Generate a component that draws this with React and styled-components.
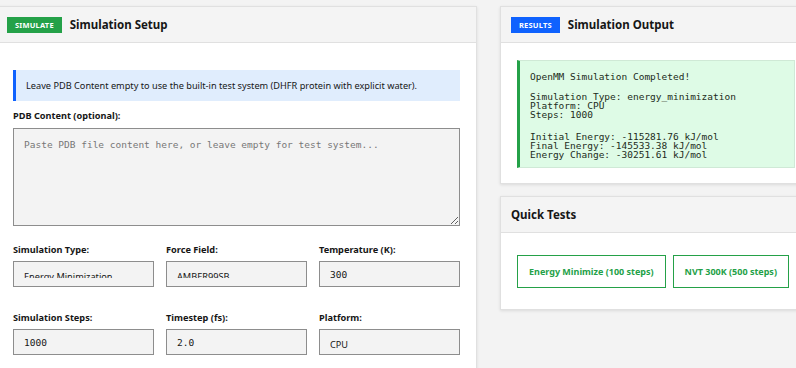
import styled, { createGlobalStyle } from 'styled-components'

const GlobalStyle = createGlobalStyle`
  html, body {
    margin: 0;
    padding: 0;
    background: #f3f3f3;
    overflow: hidden;
  }
  body {
    font-family: 'Noto Sans', 'Liberation Sans', sans-serif;
    color: #161616;
  }
`

const colors = {
  green: '#24a148',
  blue: '#0f62fe',
  text: '#161616',
  border: '#e0e0e0',
  field: '#f3f3f3',
  fieldBorder: '#8d8d8d',
}

const mono = `'DejaVu Sans Mono', 'Liberation Mono', monospace`

const Page = styled.div`
  display: grid;
  grid-template-columns: 481px 312px;
  column-gap: 23px;
  align-items: start;
  padding-top: 6px;
  margin-left: -4px;
  width: 830px;
`

const Column = styled.div`
  display: flex;
  flex-direction: column;
  gap: 12px;
`

const Panel = styled.section`
  background: #ffffff;
  border: 1px solid ${colors.border};
  box-shadow: 0 1px 3px rgba(0, 0, 0, 0.1);
  height: ${({ $tall }) => ($tall ? '400px' : 'auto')};
`

const PanelHeader = styled.header`
  display: flex;
  align-items: center;
  gap: 8px;
  height: 35px;
  padding: 0 10px;
  background: #f4f4f4;
  border-bottom: 1px solid ${colors.border};
`

const Badge = styled.span`
  display: inline-flex;
  align-items: center;
  justify-content: center;
  height: 16px;
  padding: 0 8px;
  background: ${({ $tone }) => ($tone === 'blue' ? colors.blue : colors.green)};
  color: #ffffff;
  font-size: 7.5px;
  font-weight: 700;
  letter-spacing: 0.2px;
  text-transform: uppercase;
`

const PanelTitle = styled.h2`
  margin: 0;
  font-size: 11.5px;
  font-weight: 700;
  color: ${colors.text};
`

const PanelBody = styled.div`
  padding: ${({ $pad }) => $pad || '16px'};
`

const InfoNote = styled.div`
  background: #e0edfd;
  border-left: 3px solid ${colors.blue};
  padding: 0 10px;
  height: 31px;
  display: flex;
  align-items: center;
  font-size: 9.2px;
  color: ${colors.text};
  margin-bottom: 9px;
`

const FieldLabel = styled.label`
  display: block;
  font-size: 9.2px;
  line-height: 12px;
  font-weight: 700;
  color: ${colors.text};
  margin-bottom: ${({ $gap }) => $gap || '4px'};
`

const TextArea = styled.textarea`
  display: block;
  box-sizing: border-box;
  width: 100%;
  height: 98px;
  margin: 0;
  padding: 10px 10px;
  background: ${colors.field};
  border: 1px solid ${colors.fieldBorder};
  border-radius: 0;
  font-family: ${mono};
  font-size: 9.5px;
  color: ${colors.text};
  outline: none;
  &::placeholder {
    color: #777777;
  }
`

const FieldGrid = styled.div`
  display: grid;
  grid-template-columns: repeat(3, 1fr);
  column-gap: 12px;
  row-gap: 25px;
  margin-top: 18px;
`

const TextInput = styled.input`
  display: block;
  box-sizing: border-box;
  width: 100%;
  height: 26px;
  margin: 0;
  padding: 0 10px;
  background: ${colors.field};
  border: 1px solid ${colors.fieldBorder};
  border-radius: 0;
  font-family: ${mono};
  font-size: 9.5px;
  color: ${colors.text};
  outline: none;
`

const SelectBox = styled.div`
  box-sizing: border-box;
  height: 26px;
  padding: 0 10px;
  background: ${colors.field};
  border: 1px solid ${colors.fieldBorder};
`

const SelectText = styled.div`
  height: ${({ $clip }) => ($clip ? '16px' : '22px')};
  overflow: hidden;
  padding-top: 9px;
  box-sizing: border-box;
  font-size: 9.2px;
  line-height: 12px;
  color: ${colors.text};
  white-space: nowrap;
`

const OutputBox = styled.div`
  background: #defbe6;
  border: 1px solid #cfe9d6;
  border-left: 3px solid ${colors.green};
  padding: 11px 10px 8px;
  font-family: ${mono};
  font-size: 9.5px;
  line-height: 9px;
  color: #1c2b20;
  white-space: pre;
`

const OutputBlock = styled.div`
  margin-bottom: ${({ $gap }) => $gap || '0'};
`

const ButtonRow = styled.div`
  display: flex;
  gap: 7px;
`

const OutlineButton = styled.button`
  height: 33px;
  padding: 0 11px;
  background: #ffffff;
  border: 1px solid ${colors.green};
  border-radius: 0;
  color: ${colors.green};
  font-family: 'Noto Sans', 'Liberation Sans', sans-serif;
  font-size: 9px;
  font-weight: 700;
  white-space: nowrap;
`

const fields = [
  { label: 'Simulation Type:', value: 'Energy Minimization', select: true, clip: true },
  { label: 'Force Field:', value: 'AMBER99SB', select: true, clip: true },
  { label: 'Temperature (K):', value: '300' },
  { label: 'Simulation Steps:', value: '1000' },
  { label: 'Timestep (fs):', value: '2.0' },
  { label: 'Platform:', value: 'CPU', select: true },
]

function Field({ label, value, select, clip }) {
  return (
    <div>
      <FieldLabel $gap="5px">{label}</FieldLabel>
      {select ? (
        <SelectBox>
          <SelectText $clip={clip}>{value}</SelectText>
        </SelectBox>
      ) : (
        <TextInput readOnly value={value} />
      )}
    </div>
  )
}

function App() {
  return (
    <>
      <GlobalStyle />
      <Page>
        <Panel $tall>
          <PanelHeader>
            <Badge>Simulate</Badge>
            <PanelTitle>Simulation Setup</PanelTitle>
          </PanelHeader>
          <PanelBody $pad="27px 16px 16px">
            <InfoNote>
              Leave PDB Content empty to use the built-in test system (DHFR
              protein with explicit water).
            </InfoNote>
            <FieldLabel $gap="6px">PDB Content (optional):</FieldLabel>
            <TextArea
              readOnly
              placeholder="Paste PDB file content here, or leave empty for test system..."
            />
            <FieldGrid>
              {fields.map((field) => (
                <Field key={field.label} {...field} />
              ))}
            </FieldGrid>
          </PanelBody>
        </Panel>

        <Column>
          <Panel>
            <PanelHeader>
              <Badge $tone="blue">Results</Badge>
              <PanelTitle>Simulation Output</PanelTitle>
            </PanelHeader>
            <PanelBody $pad="17px 16px 15px">
              <OutputBox>
                <OutputBlock $gap="10.5px">OpenMM Simulation Completed!</OutputBlock>
                <OutputBlock $gap="13px">
                  {'Simulation Type: energy_minimization\nPlatform: CPU\nSteps: 1000'}
                </OutputBlock>
                <OutputBlock>
                  {'Initial Energy: -115281.76 kJ/mol\nFinal Energy: -145533.38 kJ/mol\nEnergy Change: -30251.61 kJ/mol'}
                </OutputBlock>
              </OutputBox>
            </PanelBody>
          </Panel>

          <Panel>
            <PanelHeader>
              <PanelTitle>Quick Tests</PanelTitle>
            </PanelHeader>
            <PanelBody $pad="22px 16px 21px">
              <ButtonRow>
                <OutlineButton>Energy Minimize (100 steps)</OutlineButton>
                <OutlineButton>NVT 300K (500 steps)</OutlineButton>
              </ButtonRow>
            </PanelBody>
          </Panel>
        </Column>
      </Page>
    </>
  )
}

export default App
